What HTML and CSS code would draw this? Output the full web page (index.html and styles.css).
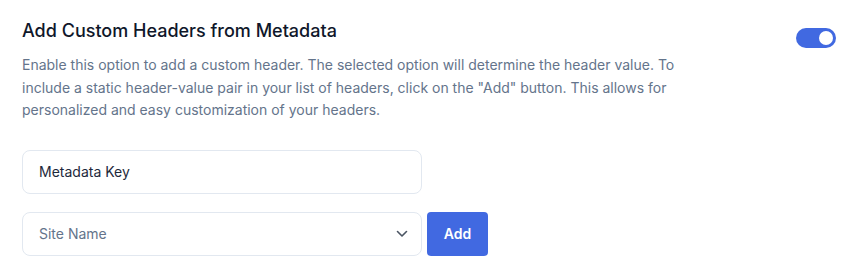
FILE: index.html
```html
<!DOCTYPE html>
<html>
<head>
<meta charset="utf-8">
<link rel="stylesheet" href="styles.css">
</head>
<body>
<div class="panel">
  <div class="head">
    <div class="text">
      <h2 class="title">Add Custom Headers from Metadata</h2>
      <p class="desc">Enable this option to add a custom header. The selected option will determine the header value. To include a static header-value pair in your list of headers, click on the "Add" button. This allows for personalized and easy customization of your headers.</p>
    </div>
    <div class="toggle"><span class="knob"></span></div>
  </div>
  <div class="field">Metadata Key</div>
  <div class="row">
    <div class="select">
      <span>Site Name</span>
      <svg class="chev" width="12" height="8" viewBox="0 0 12 8"><path d="M1.5 1.5 6 6l4.5-4.5" fill="none" stroke="#4b5563" stroke-width="1.6" stroke-linecap="round" stroke-linejoin="round"/></svg>
    </div>
    <button class="add">Add</button>
  </div>
</div>
</body>
</html>
```
FILE: styles.css
```css
html, body { margin: 0; padding: 0; background: #fff; }
body { font-family: Inter, "Noto Sans", sans-serif; }
.panel { padding: 19px 17px 0 22px; }
.head { display: flex; justify-content: space-between; align-items: flex-start; }
.text { width: 680px; }
.title { margin: 0; font-size: 18px; font-weight: 500; color: #0f172a; line-height: 22px; padding-top: 1px; }
.desc { margin: 12px 0 0; font-size: 14px; line-height: 22.5px; color: #64748b; }
.toggle { width: 40px; height: 20px; border-radius: 10px; background: #4169e1; margin-top: 9px; position: relative; }
.knob { position: absolute; right: 3px; top: 3px; width: 14px; height: 14px; border-radius: 50%; background: #fff; }
.field { margin-top: 28px; width: 400px; height: 44px; border: 1px solid #e2e8f0; border-radius: 8px; display: flex; align-items: center; padding: 0 16px; box-sizing: border-box; font-size: 14px; color: #1e293b; }
.row { display: flex; gap: 5px; margin-top: 18px; }
.select { display: flex; align-items: center; justify-content: space-between; padding: 0 13px 0 16px; box-sizing: border-box; width: 400px; height: 44px; border: 1px solid #e2e8f0; border-radius: 8px; font-size: 14px; color: #64748b; }
.add { width: 61px; height: 44px; border: 0; border-radius: 4px; background: #4169e1; color: #fff; font-family: inherit; font-size: 14px; font-weight: 600; }
```
